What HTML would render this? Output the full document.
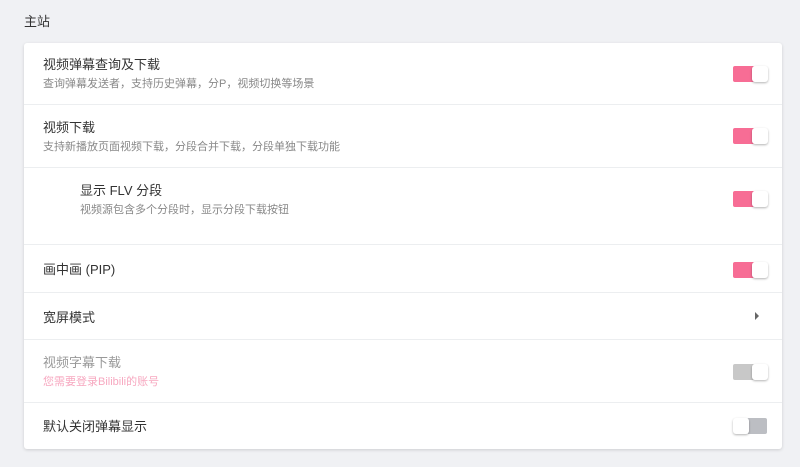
<!DOCTYPE html>
<html><head><meta charset="utf-8"><style>
body{margin:0;width:800px;height:467px;background:#f0f1f4;font-family:"Liberation Sans","Noto Sans CJK SC",sans-serif;position:relative;overflow:hidden}
.h{position:absolute;left:24px;top:11px;font-size:13px;color:#333}
.card{position:absolute;left:24px;top:43px;width:758px;height:406px;background:#fff;border-radius:3px;box-shadow:0 1px 3px rgba(0,0,0,.15)}
.row{position:absolute;left:0;right:0;border-bottom:1px solid #eceef0}
.t{position:absolute;left:19px;font-size:13px;color:#333}
.d{position:absolute;left:19px;font-size:11px;color:#888}
.sw{position:absolute;left:709px;width:34px;height:16px}
.tr{position:absolute;left:0;top:0;width:22px;height:16px;background:#f76d95;border-radius:2px}
.kn{position:absolute;left:19px;top:0;width:16px;height:16px;background:#fff;border-radius:3px;box-shadow:0 1px 2px rgba(0,0,0,.3)}
.off .tr{left:14px;width:20px;background:#bcbec3}
.off .kn{left:0}
.dis .tr{background:#c8c8c8}
</style></head><body>
<div class="h">主站</div>
<div class="card">
<div class="row" style="top:0;height:61px"><div class="t" style="top:11px">视频弹幕查询及下载</div><div class="d" style="top:32px">查询弹幕发送者，支持历史弹幕，分P，视频切换等场景</div><div class="sw" style="top:23px"><div class="tr"></div><div class="kn"></div></div></div>
<div class="row" style="top:62px;height:62px"><div class="t" style="top:12px">视频下载</div><div class="d" style="top:33px">支持新播放页面视频下载，分段合并下载，分段单独下载功能</div><div class="sw" style="top:23px"><div class="tr"></div><div class="kn"></div></div></div>
<div class="row" style="top:125px;height:76px"><div class="t" style="top:12px;left:56px">显示 FLV 分段</div><div class="d" style="top:33px;left:56px">视频源包含多个分段时，显示分段下载按钮</div><div class="sw" style="top:23px"><div class="tr"></div><div class="kn"></div></div></div>
<div class="row" style="top:202px;height:47px"><div class="t" style="top:14px">画中画 (PIP)</div><div class="sw" style="top:17px"><div class="tr"></div><div class="kn"></div></div></div>
<div class="row" style="top:250px;height:46px"><div class="t" style="top:14px">宽屏模式</div><div style="position:absolute;left:731px;top:19px;width:0;height:0;border-left:4px solid #666;border-top:4px solid transparent;border-bottom:4px solid transparent"></div></div>
<div class="row" style="top:297px;height:62px"><div class="t" style="top:12px;color:#999">视频字幕下载</div><div class="d" style="top:33px;color:#f7a8c0">您需要登录Bilibili的账号</div><div class="sw dis" style="top:24px"><div class="tr"></div><div class="kn"></div></div></div>
<div class="row" style="top:360px;height:46px;border:none"><div class="t" style="top:13px">默认关闭弹幕显示</div><div class="sw off" style="top:15px"><div class="tr"></div><div class="kn"></div></div></div>
</div>
</body></html>
